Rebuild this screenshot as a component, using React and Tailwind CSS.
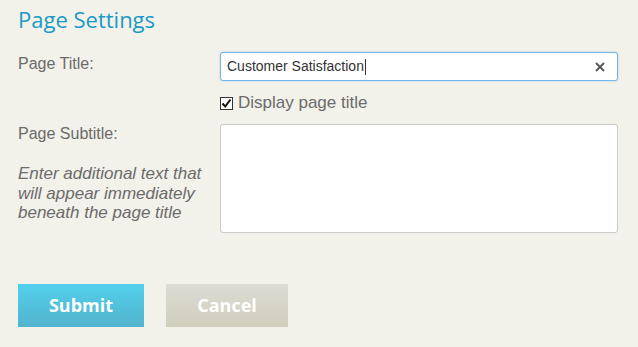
import React from "react";

export default function App() {
  return (
    <div className="w-[638px] h-[347px] bg-[#f2f1ea] overflow-hidden pl-[18px] pr-[20px]" style={{ fontFamily: '"Liberation Sans", Arial, sans-serif' }}>
      <h1 className="pt-[4px] text-[22px] leading-[30px] text-[#1b9ac6]" style={{ fontFamily: '"Open Sans", sans-serif' }}>Page Settings</h1>
      <div className="mt-[18px] flex">
        <div className="w-[202px] text-[16px] leading-[20px] text-[#6b6b6b] pt-[2px]">Page Title:</div>
        <div className="flex-1">
          <div className="h-[29px] bg-white border border-[#72b4ea] rounded-[3px] flex items-center pl-[6px] pr-[12px] shadow-[0_0_2px_rgba(114,180,234,0.6)]">
            <span className="text-[14px] text-[#333] flex-1 flex items-center">Customer Satisfaction<span className="inline-block w-px h-[16px] bg-[#333] ml-px"></span></span>
            <svg width="10" height="10" viewBox="0 0 10 10"><path d="M1 1L9 9M9 1L1 9" stroke="#555" strokeWidth="1.8" /></svg>
          </div>
          <label className="mt-[12px] flex items-center text-[17px] leading-[20px] text-[#6b6b6b]">
            <span className="w-[13px] h-[13px] border border-[#333] bg-white flex items-center justify-center mr-[5px]">
              <svg width="11" height="11" viewBox="0 0 11 11"><path d="M1.5 5.5L4.2 8.5L9.5 1.5" stroke="#111" strokeWidth="2" fill="none" /></svg>
            </span>
            Display page title
          </label>
        </div>
      </div>
      <div className="mt-[11px] flex">
        <div className="w-[202px] text-[#6b6b6b]">
          <div className="text-[16px] leading-[20px]">Page Subtitle:</div>
          <div className="mt-[20px] text-[17px] leading-[19.5px] italic">Enter additional text that will appear immediately beneath the page title</div>
        </div>
        <div className="flex-1 h-[109px] bg-white border border-[#cbcbcb] rounded-[3px]"></div>
      </div>
      <div className="mt-[51px] flex gap-[22px]" style={{ fontFamily: '"Open Sans", sans-serif' }}>
        <button className="w-[126px] h-[43px] bg-gradient-to-b from-[#52d0ec] to-[#52b3cd] text-white font-bold text-[18px]">Submit</button>
        <button className="w-[122px] h-[43px] bg-gradient-to-b from-[#dddcd5] to-[#d0cebb] text-white font-bold text-[18px]">Cancel</button>
      </div>
    </div>
  );
}
